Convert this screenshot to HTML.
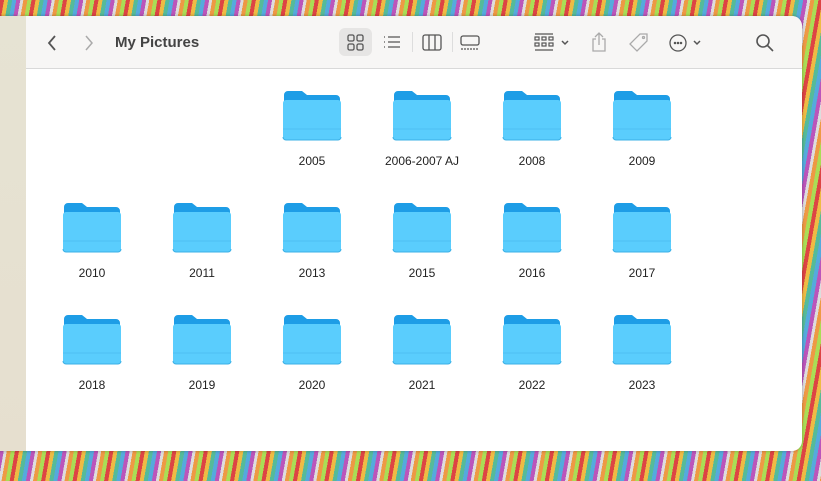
<!DOCTYPE html>
<html><head><meta charset="utf-8"><style>
*{margin:0;padding:0;box-sizing:border-box}
body{width:821px;height:481px;overflow:hidden;position:relative;font-family:"Liberation Sans",sans-serif;
background:repeating-linear-gradient(100deg,#d44 0 4px,#eb4 4px 8px,#5b9 8px 12px,#5ad 12px 16px,#b5b 16px 20px,#ddd 20px 23px,#e94 23px 27px,#ad5 27px 31px);}
.win{position:absolute;left:-10px;top:16px;width:812px;height:435px;background:#fff;border-radius:10px;overflow:hidden;box-shadow:0 0 3px rgba(0,0,0,.3)}
.side{position:absolute;left:0;top:0;width:36px;height:100%;background:linear-gradient(#e6e3d3,#e6dfcf)}
.tb{position:absolute;left:36px;top:0;right:0;height:53px;background:#f7f6f5;border-bottom:1px solid #d9d9d9}
.t{position:absolute;font-size:15px;font-weight:bold;color:#444;left:89px;top:18px}
svg.i{position:absolute}
.f{position:absolute;width:110px;text-align:center;font-size:12px;color:#222}
.f svg{display:block;margin:0 auto 13px}
</style></head><body>
<div class="win">
<div class="side"></div>
<div class="tb">
<svg class="i" style="left:20px;top:18px" width="14" height="18"><path d="M9 2L3 9l6 7" fill="none" stroke="#555" stroke-width="1.8"/></svg>
<svg class="i" style="left:56px;top:18px" width="14" height="18"><path d="M4 2l6 7-6 7" fill="none" stroke="#aaa" stroke-width="1.5"/></svg>
<div class="t">My Pictures</div>
<div style="position:absolute;left:313px;top:12px;width:33px;height:28px;background:#e6e5e4;border-radius:6px"></div>
<svg class="i" style="left:321px;top:18px" width="17" height="17" fill="none" stroke="#555" stroke-width="1.3"><rect x="1" y="1" width="6" height="6" rx="1.5"/><rect x="10" y="1" width="6" height="6" rx="1.5"/><rect x="1" y="10" width="6" height="6" rx="1.5"/><rect x="10" y="10" width="6" height="6" rx="1.5"/></svg>
<svg class="i" style="left:357px;top:19px" width="18" height="14" stroke="#555" stroke-width="1.3"><path d="M1 2h1M1 7h1M1 12h1M5 2h12M5 7h12M5 12h12"/></svg>
<div style="position:absolute;left:386px;top:16px;width:1px;height:20px;background:#ddd"></div>
<svg class="i" style="left:396px;top:18px" width="20" height="17" fill="none" stroke="#555" stroke-width="1.3"><rect x="1" y="1" width="18" height="15" rx="2"/><path d="M7 1v15M13 1v15"/></svg>
<div style="position:absolute;left:426px;top:16px;width:1px;height:20px;background:#ddd"></div>
<svg class="i" style="left:434px;top:19px" width="20" height="16" fill="none" stroke="#555" stroke-width="1.3"><rect x="1" y="1" width="18" height="9" rx="2"/><path d="M1 14h18" stroke-dasharray="2 1"/></svg>
<svg class="i" style="left:508px;top:17px" width="40" height="18" fill="none" stroke="#555" stroke-width="1.2"><path d="M1 1h18M1 17h18" /><rect x="1" y="4" width="4" height="3"/><rect x="8" y="4" width="4" height="3"/><rect x="15" y="4" width="4" height="3"/><rect x="1" y="10" width="4" height="3"/><rect x="8" y="10" width="4" height="3"/><rect x="15" y="10" width="4" height="3"/><path d="M28 8l3 3 3-3" stroke-width="1.5"/></svg>
<svg class="i" style="left:565px;top:15px" width="16" height="22" fill="none" stroke="#aaa" stroke-width="1.3"><path d="M5 8H2v12h12V8h-3M8 14V2M4 6l4-4 4 4"/></svg>
<svg class="i" style="left:602px;top:16px" width="22" height="22" fill="none" stroke="#aaa" stroke-width="1.3"><path d="M12 2h7v7L9 19 2 12z"/><circle cx="15.5" cy="5.5" r="1"/></svg>
<svg class="i" style="left:643px;top:17px" width="36" height="20" fill="none" stroke="#555" stroke-width="1.3"><circle cx="9" cy="10" r="8"/><circle cx="6" cy="10" r=".6" fill="#555"/><circle cx="9" cy="10" r=".6" fill="#555"/><circle cx="12" cy="10" r=".6" fill="#555"/><path d="M25 8l3 3 3-3" stroke-width="1.5"/></svg>
<svg class="i" style="left:729px;top:17px" width="20" height="20" fill="none" stroke="#555" stroke-width="1.6"><circle cx="8" cy="8" r="6"/><path d="M12.5 12.5L18 18"/></svg>
</div>
</div>
<div id="g"></div>
<script>
var rows=[[null,null,"2005","2006-2007 AJ","2008","2009"],["2010","2011","2013","2015","2016","2017"],["2018","2019","2020","2021","2022","2023"]];
var h="";
var fold='<svg width="60" height="52" viewBox="0 0 60 52"><path d="M2 6a4 4 0 0 1 4-4h14l5 4h29a4 4 0 0 1 4 4v8H2z" fill="#1e9de6"/><path d="M1 14a3 3 0 0 1 3-3h52a3 3 0 0 1 3 3v34a3 3 0 0 1-3 3H4a3 3 0 0 1-3-3z" fill="#5acdfd"/><path d="M1 40h58" stroke="#4fc0f2" stroke-width="1"/><path d="M1 48a3 3 0 0 0 3 3h52a3 3 0 0 0 3-3" fill="none" stroke="#3bb0e6"/></svg>';
rows.forEach(function(r,ri){r.forEach(function(n,ci){if(!n)return;h+='<div class="f" style="left:'+(37+ci*110)+'px;top:'+(89+ri*112)+'px">'+fold+n+'</div>';});});
document.getElementById("g").innerHTML=h;
</script>
</body></html>
